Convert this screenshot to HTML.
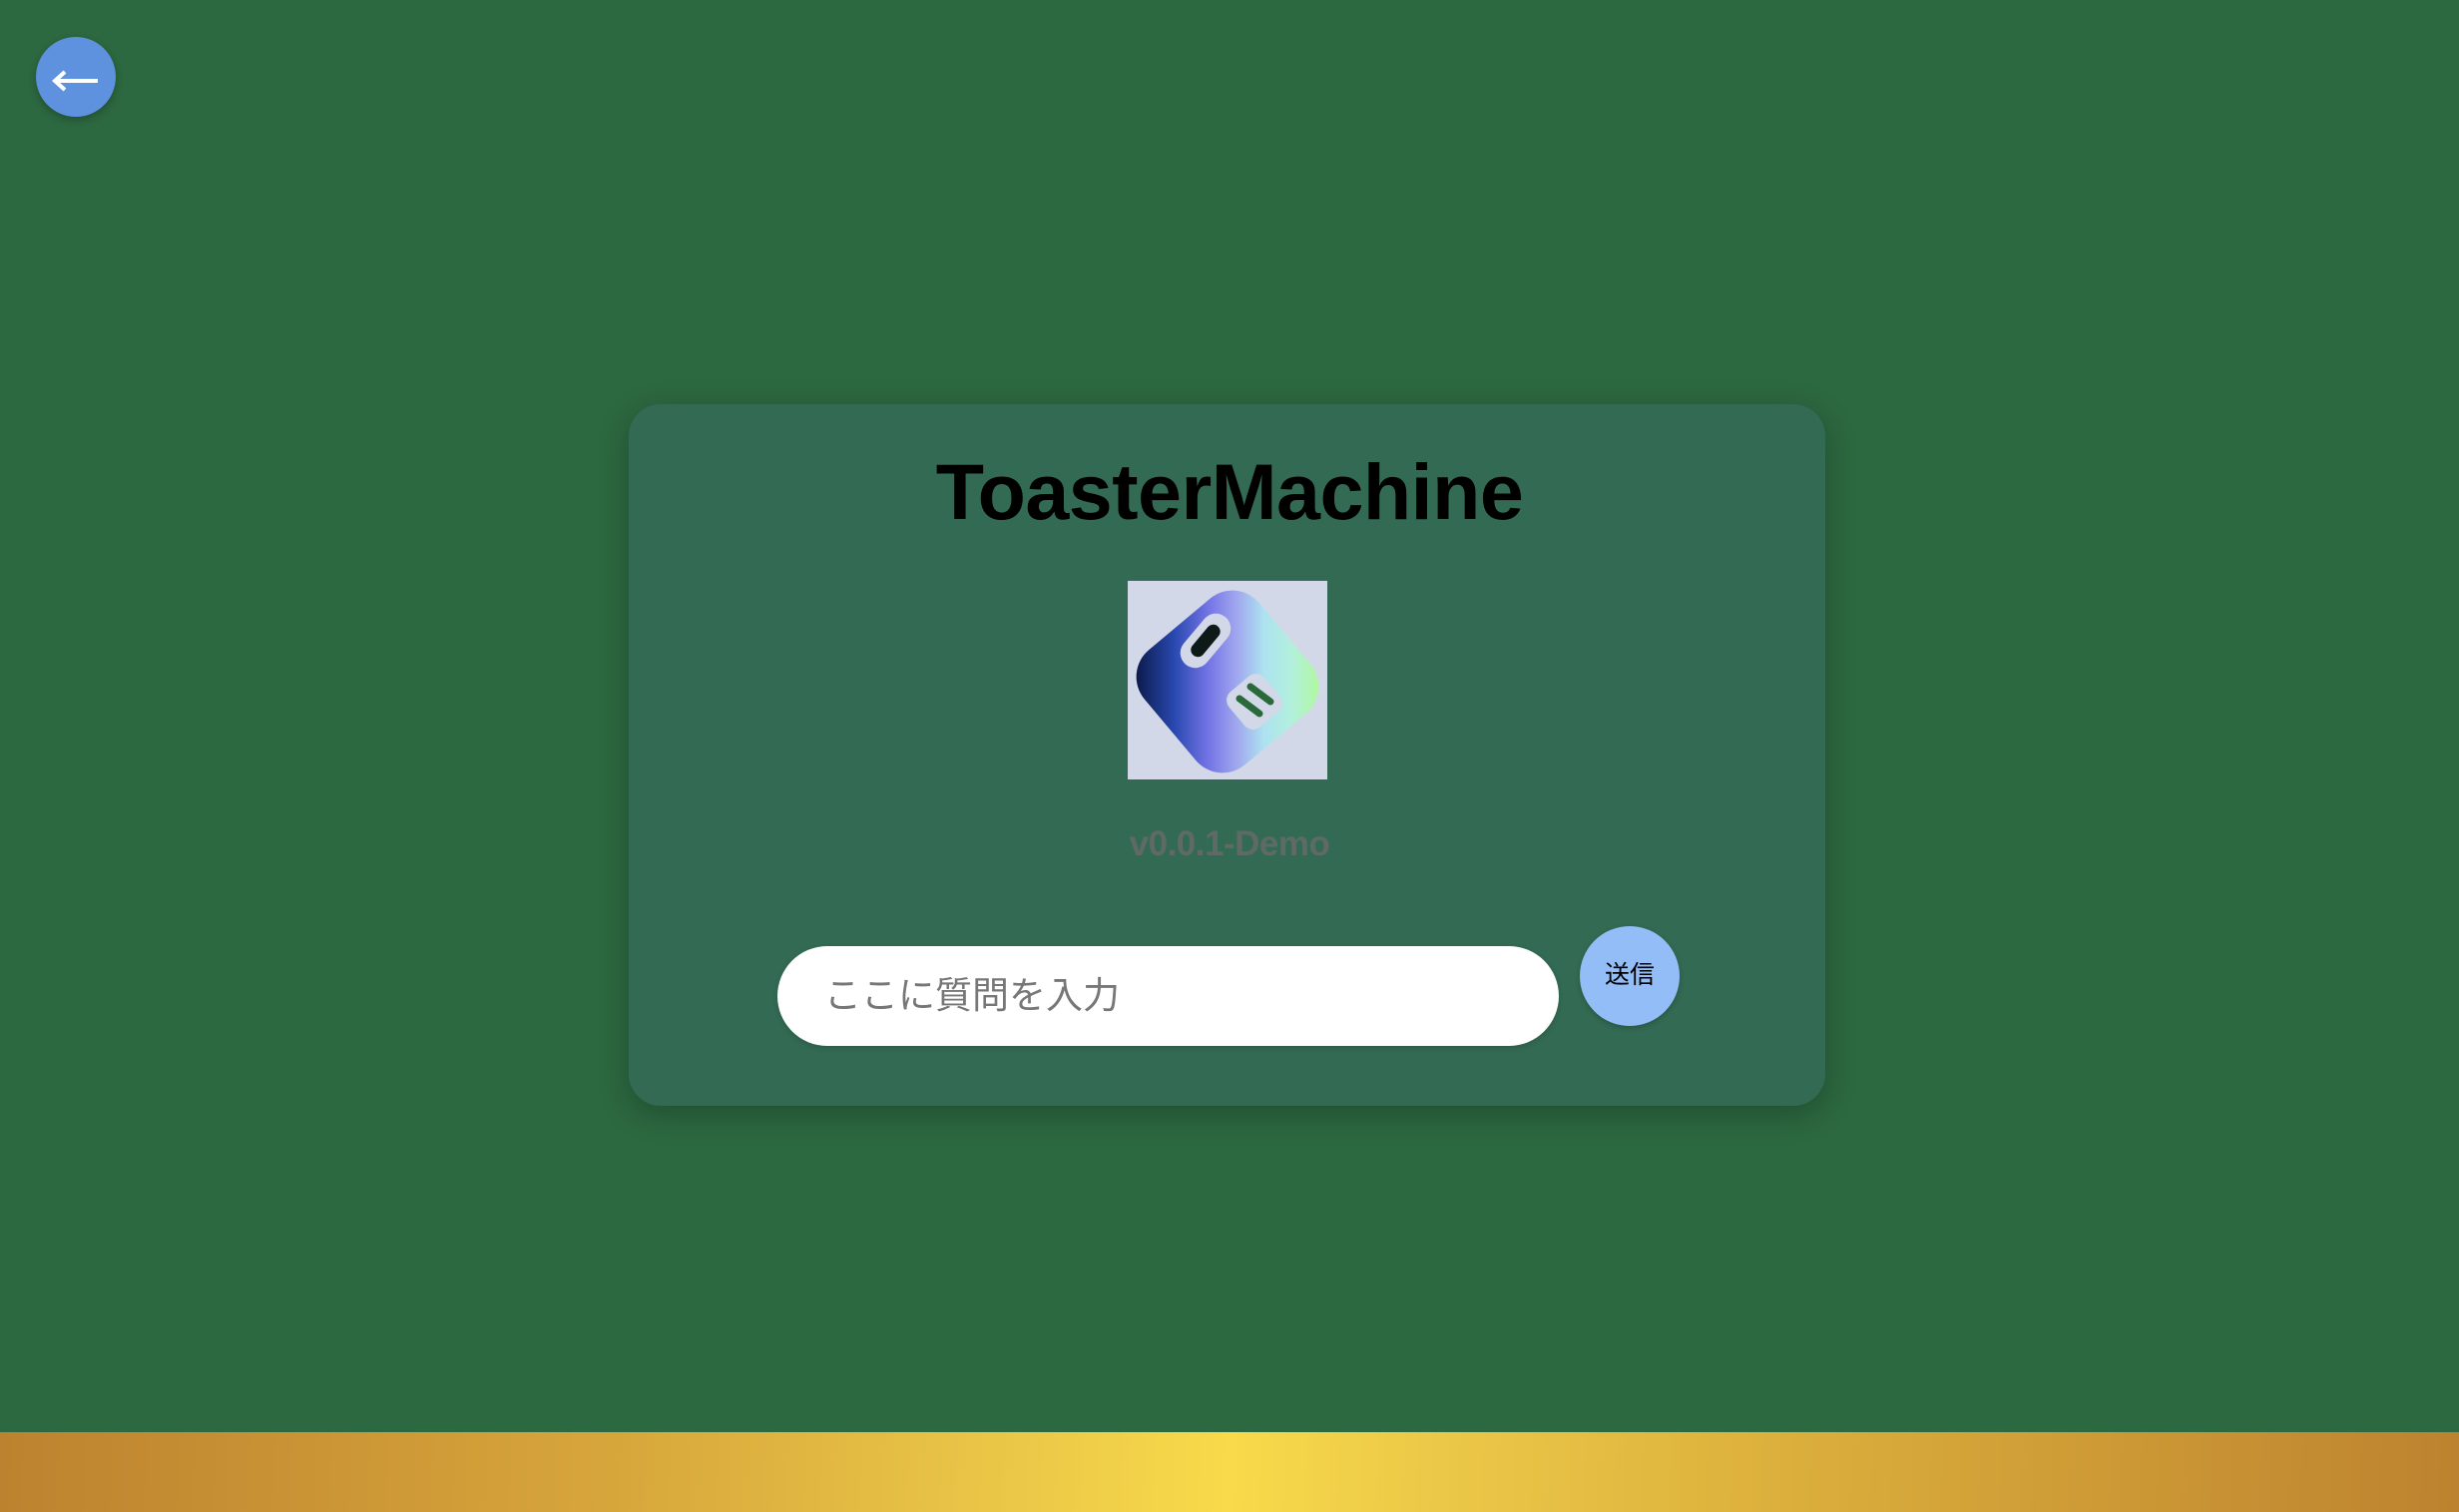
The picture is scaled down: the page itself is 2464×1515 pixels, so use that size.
<!DOCTYPE html>
<html><head><meta charset="utf-8"><style>
html,body{margin:0;padding:0}
body{width:2464px;height:1515px;background:#2c6840;position:relative;overflow:hidden;font-family:"Liberation Sans","Noto Sans CJK JP",sans-serif}
.back{position:absolute;left:36px;top:37px;width:80px;height:80px;border-radius:50%;background:#5f92de;box-shadow:0 3px 8px rgba(0,0,0,.25)}
.card{position:absolute;left:630px;top:405px;width:1199px;height:703px;border-radius:32px;background:#336a53;box-shadow:0 8px 30px rgba(0,0,0,.25)}
.title{position:absolute;left:0;width:100%;top:448px;text-align:center;font-weight:bold;font-size:79px;line-height:90px;color:#000;letter-spacing:-0.5px}
.logo{position:absolute;left:1130px;top:582px;width:200px;height:199px;background:#d2d8e8}
.ver{position:absolute;left:0;width:100%;top:826px;text-align:center;font-size:35px;font-weight:bold;line-height:40px;color:#5f6a66;letter-spacing:-0.5px}
.input{position:absolute;left:779px;top:948px;width:783px;height:100px;border-radius:50px;background:#fff;box-shadow:0 2px 6px rgba(0,0,0,.15)}
.ph{position:absolute;left:47px;top:28px;font-size:37px;line-height:44px;color:#777}
.send{position:absolute;left:1583px;top:928px;width:100px;height:100px;border-radius:50%;background:#93bdf7;text-align:center;font-size:25px;line-height:30px;color:#000;box-shadow:0 2px 6px rgba(0,0,0,.2)}
.bar{position:absolute;left:0;top:1435px;width:2464px;height:80px;background:linear-gradient(92deg,#bd822f 0%,#d7a63b 25%,#ecc948 42%,#f8da4a 50%,#ecc948 58%,#dcb03c 72%,#bd822f 100%)}
</style></head><body>
<div class="back"><svg width="80" height="80" viewBox="0 0 80 80"><path d="M20 44H62" stroke="#fff" stroke-width="4"/><path d="M29 35L19 44L29 53" stroke="#fff" stroke-width="4" fill="none"/></svg></div>
<div class="card"></div>
<div class="title">ToasterMachine</div>
<div class="logo"><svg width="200" height="199" viewBox="0 0 200 199">
<defs><linearGradient id="g" gradientUnits="userSpaceOnUse" x1="7" y1="0" x2="192" y2="0" gradientTransform="rotate(40 100 101)">
<stop offset="0" stop-color="#0b1848"/><stop offset=".22" stop-color="#2a4ab2"/><stop offset=".4" stop-color="#7474e6"/><stop offset=".55" stop-color="#a0a6ee"/><stop offset=".7" stop-color="#ade2f0"/><stop offset=".85" stop-color="#b2f0dc"/><stop offset="1" stop-color="#b0f8a0"/></linearGradient></defs>
<rect x="25" y="26" width="150" height="150" rx="35" fill="url(#g)" transform="rotate(-40 100 101)"/>
<rect x="63" y="29" width="30" height="62" rx="15" fill="#d2d8e8" transform="rotate(40 78 60)"/>
<rect x="71" y="41" width="14" height="38" rx="7" fill="#0d1a17" transform="rotate(40 78 60)"/>
<rect x="104" y="98" width="46" height="46" rx="11" fill="#d2d8e8" transform="rotate(-40 127 121)"/>
<path d="M123 106L143 121M112 118L132 133" stroke="#2a6a3a" stroke-width="7" stroke-linecap="round"/>
</svg></div>
<div class="ver">v0.0.1-Demo</div>
<div class="input"><div class="ph">ここに質問を入力</div></div>
<div class="send"><div style="padding-top:34px">送信</div></div>
<div class="bar"></div>
</body></html>
